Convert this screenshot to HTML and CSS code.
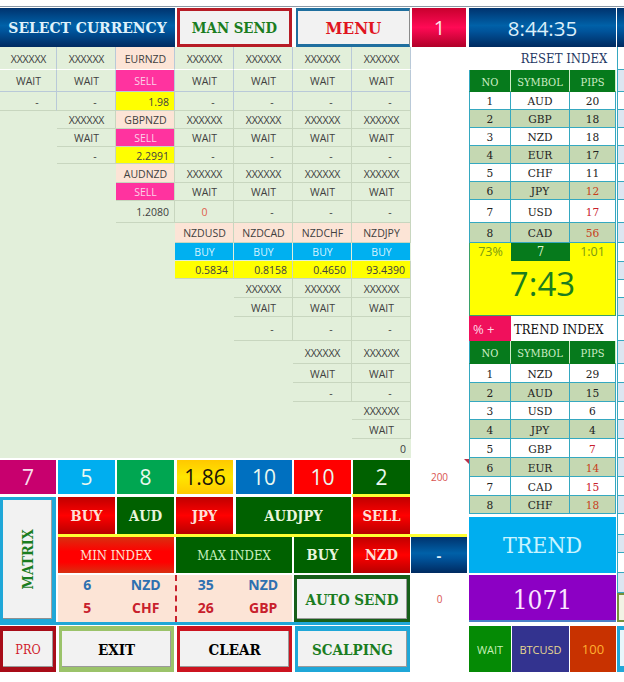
FILE: index.html
```html
<!DOCTYPE html>
<html lang="en">
<head>
<meta charset="utf-8">
<title>Currency Matrix</title>
<link rel="stylesheet" href="styles.css">
</head>
<body>
<div class="app">
  <div class="left">
    <div class="topbar">
      <div class="top-title">SELECT CURRENCY</div>
      <div class="top-man">MAN SEND</div>
      <div class="top-menu">MENU</div>
      <div class="top-one">1</div>
    </div>
    <div class="matrix">
      <div class="c x">XXXXXX</div><div class="c x">XXXXXX</div><div class="c p">EURNZD</div><div class="c x">XXXXXX</div><div class="c x">XXXXXX</div><div class="c x">XXXXXX</div><div class="c x">XXXXXX</div>
      <div class="c">WAIT</div><div class="c">WAIT</div><div class="c sell">SELL</div><div class="c">WAIT</div><div class="c">WAIT</div><div class="c">WAIT</div><div class="c">WAIT</div>
      <div class="c d">-</div><div class="c d">-</div><div class="c y">1.98</div><div class="c d">-</div><div class="c d">-</div><div class="c d">-</div><div class="c d">-</div>

      <div class="c x from2">XXXXXX</div><div class="c p">GBPNZD</div><div class="c x">XXXXXX</div><div class="c x">XXXXXX</div><div class="c x">XXXXXX</div><div class="c x">XXXXXX</div>
      <div class="c from2">WAIT</div><div class="c sell">SELL</div><div class="c">WAIT</div><div class="c">WAIT</div><div class="c">WAIT</div><div class="c">WAIT</div>
      <div class="c d from2">-</div><div class="c y">2.2991</div><div class="c d">-</div><div class="c d">-</div><div class="c d">-</div><div class="c d">-</div>

      <div class="c p from3">AUDNZD</div><div class="c x">XXXXXX</div><div class="c x">XXXXXX</div><div class="c x">XXXXXX</div><div class="c x">XXXXXX</div>
      <div class="c sell from3">SELL</div><div class="c">WAIT</div><div class="c">WAIT</div><div class="c">WAIT</div><div class="c">WAIT</div>
      <div class="c n from3">1.2080</div><div class="c zero">0</div><div class="c d">-</div><div class="c d">-</div><div class="c d">-</div>

      <div class="c p from4">NZDUSD</div><div class="c p">NZDCAD</div><div class="c p">NZDCHF</div><div class="c p">NZDJPY</div>
      <div class="c buy from4">BUY</div><div class="c buy">BUY</div><div class="c buy">BUY</div><div class="c buy">BUY</div>
      <div class="c y from4">0.5834</div><div class="c y">0.8158</div><div class="c y">0.4650</div><div class="c y">93.4390</div>

      <div class="c x from5">XXXXXX</div><div class="c x">XXXXXX</div><div class="c x">XXXXXX</div>
      <div class="c from5">WAIT</div><div class="c">WAIT</div><div class="c">WAIT</div>
      <div class="c d from5">-</div><div class="c d">-</div><div class="c d">-</div>

      <div class="c x from6">XXXXXX</div><div class="c x">XXXXXX</div>
      <div class="c from6">WAIT</div><div class="c">WAIT</div>
      <div class="c d from6">-</div><div class="c d">-</div>

      <div class="c x from7">XXXXXX</div>
      <div class="c from7">WAIT</div>
      <div class="c n plain from7">0</div>
    </div>

    <div class="panel">
      <div class="t s1">7</div><div class="t s2">5</div><div class="t s3">8</div><div class="t s4">1.86</div><div class="t s5">10</div><div class="t s6">10</div><div class="t s7">2</div><div class="side r-1">200</div>

      <div class="rule-short"></div>

      <div class="matrix-wrap"><div class="matrix-btn"><span>MATRIX</span></div></div>
      <div class="act red r-3 k2">BUY</div><div class="act green r-3 k3">AUD</div><div class="act red r-3 k4">JPY</div><div class="act green r-3 k5">AUDJPY</div><div class="act red r-3 k7">SELL</div>

      <div class="rule-yellow"></div>

      <div class="idx-min">MIN INDEX</div>
      <div class="idx-max">MAX INDEX</div>
      <div class="act green r-5 k6 mid">BUY</div>
      <div class="act red r-5 k7 mid">NZD</div>
      <div class="dash-btn">-</div>

      <div class="values">
        <div class="half">
          <span class="blue">6</span><span class="blue">NZD</span>
          <span class="crim">5</span><span class="crim">CHF</span>
        </div>
        <div class="half split">
          <span class="blue">35</span><span class="blue">NZD</span>
          <span class="crim">26</span><span class="crim">GBP</span>
        </div>
      </div>
      <div class="btn auto">AUTO SEND</div>
      <div class="side r-7">0</div>

      <div class="rule-blue"></div>

      <div class="btn pro">PRO</div>
      <div class="btn exit">EXIT</div>
      <div class="btn clear">CLEAR</div>
      <div class="btn scalp">SCALPING</div>
    </div>
  </div>

  <div class="right">
    <div class="rmain">
      <div class="clock">8:44:35</div>
      <div class="rtitle">RESET INDEX</div>
      <div class="tbl tbl-a">
        <div class="h">NO</div><div class="h">SYMBOL</div><div class="h">PIPS</div>
        <div>1</div><div>AUD</div><div>20</div>
        <div class="g">2</div><div class="g">GBP</div><div class="g">18</div>
        <div>3</div><div>NZD</div><div>18</div>
        <div class="g">4</div><div class="g">EUR</div><div class="g">17</div>
        <div>5</div><div>CHF</div><div>11</div>
        <div class="g">6</div><div class="g">JPY</div><div class="g or">12</div>
        <div>7</div><div>USD</div><div class="rd">17</div>
        <div class="g">8</div><div class="g">CAD</div><div class="g or">56</div>
      </div>
      <div class="timer">
        <div class="timer-top"><span>73%</span><span class="timer-box">7</span><span>1:01</span></div>
        <div class="timer-big">7:43</div>
      </div>
      <div class="trend-head"><div class="pct">% +</div><div class="ttitle">TREND INDEX</div></div>
      <div class="tbl tbl-b">
        <div class="h">NO</div><div class="h">SYMBOL</div><div class="h">PIPS</div>
        <div>1</div><div>NZD</div><div>29</div>
        <div class="g">2</div><div class="g">AUD</div><div class="g">15</div>
        <div>3</div><div>USD</div><div>6</div>
        <div class="g">4</div><div class="g">JPY</div><div class="g">4</div>
        <div>5</div><div>GBP</div><div class="rd">7</div>
        <div class="g">6</div><div class="g">EUR</div><div class="g or">14</div>
        <div>7</div><div>CAD</div><div class="rd">15</div>
        <div class="g">8</div><div class="g">CHF</div><div class="g or">18</div>
      </div>
      <div class="trend">TREND</div>
      <div class="count">1071</div>
      <div class="status">
        <div class="st-wait">WAIT</div>
        <div class="st-sym">BTCUSD</div>
        <div class="st-val">100</div>
      </div>
    </div>
    <div class="strip">
      <div class="st-blue"></div>
      <div class="st-w"></div><div class="st-l"></div><div class="st-w"></div><div class="st-l"></div><div class="st-w"></div><div class="st-l"></div><div class="st-w"></div><div class="st-l"></div><div class="st-w"></div><div class="st-l"></div><div class="st-w"></div><div class="st-l"></div><div class="st-w"></div><div class="st-l"></div><div class="st-w"></div><div class="st-l"></div><div class="st-w"></div><div class="st-l"></div><div class="st-w"></div><div class="st-l"></div><div class="st-w"></div><div class="st-l"></div><div class="st-w"></div><div class="st-l"></div><div class="st-w"></div><div class="st-l"></div><div class="st-w"></div><div class="st-l"></div>
      <div class="st-olive"></div>
      <div class="st-gap"></div>
      <div class="st-btn"></div>
    </div>
  </div>
</div>
</body>
</html>
```

FILE: styles.css
```css
* { box-sizing: border-box; }
html, body { margin: 0; padding: 0; background: #fff; }
body { width: 624px; height: 682px; overflow: hidden; font-family: "Open Sans", "Liberation Sans", sans-serif; }

.app {
  display: flex;
  margin-top: 6px;
  border-top: 1px solid #8c99a6;
  padding-top: 1px;
  --slab: "DejaVu Serif", serif;
  --navy: linear-gradient(#00336e 0%, #0061a8 45%, #00539a 60%, #002a60 100%);
}
.left { width: 469px; flex: none; }
.right { width: 155px; flex: none; display: flex; }
.rmain { width: 147px; flex: none; }

/* the slab lettering of the reference is narrow, so the condensed face is asked for wherever the slab font is used */
.top-title, .top-man, .top-menu, .matrix-btn, .act, .idx-min, .idx-max, .btn, .rtitle, .tbl, .timer-box, .ttitle, .trend, .count {
  font-stretch: condensed;
}

/* top bar */
.topbar { display: flex; height: 39px; width: 466px; font-family: var(--slab); font-weight: 700; }
.topbar > div { display: flex; align-items: center; justify-content: center; }
.top-title { width: 175px; background: var(--navy); color: #dff1fa; font-size: 15.5px; }
.top-man { width: 115px; margin-left: 2px; background: #f2f2f2; border: 3px solid #b71c26; color: #1b7d1f; font-size: 14.8px; }
.top-menu { width: 114px; margin-left: 4px; background: #f2f2f2; border-style: solid; border-color: #1f6f9f #8a8a8a #1f6f9f #1f6f9f; border-width: 3px 1px 3px 2px; color: #e0151f; font-size: 17px; }
.top-one { width: 54px; margin-left: 2px; padding-left: 1px; background: linear-gradient(#c8002e, #ff0a55 50%, #b00028); color: #fbe6ea; font-family: "Open Sans", sans-serif; font-weight: 400; font-size: 20px; }

/* matrix */
.matrix {
  width: 411px;
  height: 411px;
  background: #e2efda;
  display: grid;
  grid-template-columns: 57px repeat(6, 59px);
  grid-template-rows: 23px 22px 19px 18px 18px 17px 19px 18px 22px 20px 18px 18px 19px 19px 24px 23px 19px 19px 18px 19px 19px;
  font-size: 10.5px;
  color: #404040;
}
.c { display: flex; align-items: center; justify-content: center; padding-top: 1px; padding-left: 1px; border-bottom: 1px solid #c8d6bf; border-right: 1px solid #c8d6bf; }
.c:nth-child(-n+21) { border-right-color: #b9c9d8; }
.c:nth-child(-n+7) { border-bottom-color: #fff; }
.c:nth-child(n+8):nth-child(-n+14) { border-bottom-color: #b9c9d8; }
.x { letter-spacing: -0.15px; }
.p { background: #fce4d6; }
.sell { background: #ff339f; color: #fbd2e8; }
.buy { background: #00b0f0; color: #d6f3ff; border-color: #e2efda; }
.y { background: #ffff00; justify-content: flex-end; padding-right: 5px; }
.n { justify-content: flex-end; padding-right: 5px; }
.plain { border: 0; }
.d { padding-left: 18px; }
.zero { color: #e0604c; }
.from2 { grid-column-start: 2; }
.from3 { grid-column-start: 3; }
.from4 { grid-column-start: 4; }
.from5 { grid-column-start: 5; }
.from6 { grid-column-start: 6; }
.from7 { grid-column-start: 7; }

/* bottom panel */
.panel {
  margin-top: 2px;
  display: grid;
  column-gap: 2px;
  grid-template-columns: 56px 57px 57px 57px 57px 57px 57px 55px;
  grid-template-rows: 34px 3px 37px 3px 36px 2px 47px 4px 46px;
  width: 469px;
}
.t { grid-row: 1; display: flex; align-items: center; justify-content: center; font-size: 21px; color: #e9f8ef; }
.s1 { background: #c8006e; color: #f9dcec; }
.s2 { background: #00aeef; }
.s3 { background: #00a651; }
.s4 { background: linear-gradient(#ffc800, #ffe600 50%, #ffc800); color: #1a1408; margin-left: 1px; }
.s5 { background: #0070c0; margin-left: 1px; }
.s6 { background: #ff0000; }
.s7 { background: #006100; }
.side { display: flex; align-items: center; justify-content: center; grid-column: 8; color: #d9534f; font-size: 10px; }
.r-1 { grid-row: 1; position: relative; }
.r-1::after { content: ""; position: absolute; top: -1px; right: -2px; border-style: solid; border-width: 0 5px 5px 0; border-color: transparent #b8324a transparent transparent; }
.r-7 { grid-row: 7; }
.rule-short { grid-row: 2; grid-column: 7; background: #ffff33; margin-left: -1px; }
.rule-yellow { grid-row: 4; grid-column: 2 / -1; background: #ffff33; }
.rule-blue { grid-row: 8; grid-column: 2 / 8; background: #1fa7d8; margin-bottom: 1px; margin-left: -2px; }

.matrix-wrap { grid-row: 3 / 8; grid-column: 1; background: #1fa7d8; padding: 3px 4px 6px 3px; margin-bottom: -3px; }
.matrix-btn { height: 100%; padding-left: 1px; background: #f2f2f2; border-right: 1px solid #a0a0a0; border-bottom: 1px solid #909090; display: flex; align-items: center; justify-content: center; }
.matrix-btn span { writing-mode: vertical-rl; transform: rotate(180deg); font-family: var(--slab); font-weight: 700; font-size: 14.5px; color: #1b7d1f; }

.act { display: flex; align-items: center; justify-content: center; padding-bottom: 1px; font-family: var(--slab); font-weight: 700; font-size: 14.6px; color: #f3f3e8; }
.red { background: linear-gradient(#c00000, #ff0000 50%, #b80000); color: #fde0d8; }
.green { background: #006100; color: #e8f5dc; }
.r-3 { grid-row: 3; }
.r-5 { grid-row: 5; }
.k2 { grid-column: 2; }
.k3 { grid-column: 3; }
.k4 { grid-column: 4; }
.k5 { grid-column: 5 / 7; margin-left: 1px; }
.k6 { grid-column: 6; }
.k7 { grid-column: 7; }

.idx-min, .idx-max { grid-row: 5; display: flex; align-items: center; justify-content: center; font-family: var(--slab); font-size: 13px; }
.idx-min { grid-column: 2 / 4; background: linear-gradient(#d83010, #ff0000 40%, #ff0000 70%, #d83010); color: #fce4d6; }
.idx-max { grid-column: 4 / 6; background: #006100; color: #c9f0c0; }
.dash-btn { grid-row: 5; grid-column: 8; background: var(--navy); color: #dff1fa; display: flex; align-items: center; justify-content: center; font-weight: 700; font-size: 15px; margin-left: -1px; }

.values { grid-row: 7; grid-column: 2 / 6; background: #fce4d6; display: grid; grid-template-columns: 1fr 1fr; }
.half { display: grid; grid-template-columns: 1fr 1fr; grid-template-rows: 18px 29px; align-items: center; justify-items: center; font-weight: 700; font-size: 14px; }
.split { border-left: 2px dashed #c8202c; }
.blue { color: #2e70b0; }
.crim { color: #c8202c; }

.btn { display: flex; align-items: center; justify-content: center; background: #f2f2f2; font-family: var(--slab); font-weight: 700; border-style: solid; box-shadow: inset -1px -1px 0 #9a9a9a; }
.auto { grid-row: 7; grid-column: 6 / 8; padding-top: 2px; border-color: #175f1a; border-width: 4px 3px 3px 3px; color: #1b7d1f; font-size: 15px; }
.pro, .exit, .clear, .scalp { grid-row: 9; padding-top: 1px; border-width: 5px 3px 5px 3px; }
.pro { grid-column: 1; border-color: #a80c18; color: #d01a2a; font-weight: 400; font-size: 12.5px; }
.exit { grid-column: 2 / 4; border-color: #9bc36a; color: #000; font-size: 15px; margin-left: 1px; }
.clear { grid-column: 4 / 6; border-color: #cc1420; color: #000; font-size: 15px; margin-left: 1px; }
.scalp { grid-column: 6 / 8; border-color: #1fa7d8; color: #1b7d1f; font-size: 15px; margin-left: 1px; }

/* right column */
.clock { height: 39px; background: var(--navy); color: #dbeffa; font-size: 20.5px; display: flex; align-items: center; justify-content: center; }
.rtitle { height: 23px; display: flex; align-items: center; justify-content: center; padding-left: 43px; font-family: var(--slab); font-size: 13px; color: #1f3864; }
.tbl { display: grid; grid-template-columns: 42px 59px 46px; font-family: var(--slab); font-size: 11.8px; color: #222; }
.tbl > div { display: flex; align-items: center; justify-content: center; padding-top: 1px; border-right: 1px solid #35a8c0; border-bottom: 1px solid #35a8c0; }
.tbl > div:nth-child(3n+1) { border-left: 1px solid #35a8c0; }
.tbl-a { grid-template-rows: 22px 18px 18px 18px 18px 18px 18px 23px 20px; }
.tbl-b { grid-template-rows: 23px 19px 19px 18px 19px 19px 19px 19px 18px; }
.tbl > .h { background: #067a1c; color: #cdeec6; padding-top: 3px; border-color: #067a1c #cdeec6 #067a1c #067a1c; font-size: 11px; }
.tbl > .g { background: #c5d8b2; }
.tbl > .or { color: #c8401c; }
.tbl > .rd { color: #c8202c; }

.timer { height: 73px; background: #ffff00; border: 1px solid #3aa06a; border-top: 0; }
.timer-top { display: grid; grid-template-columns: 41px 59px 1fr; height: 18px; color: #7c9a10; font-size: 12.5px; text-align: center; line-height: 18px; }
.timer-box { background: #067a1c; color: #dff5d0; font-family: var(--slab); }
.timer-big { text-align: center; font-size: 33px; line-height: 46px; color: #1b7d1f; }

.trend-head { height: 25px; display: flex; }
.pct { width: 42px; background: #f0105c; color: #ffd8e4; font-size: 13px; display: flex; align-items: center; padding-left: 4px; }
.ttitle { flex: 1; display: flex; align-items: center; padding: 1px 0 0 3px; font-family: var(--slab); font-size: 13px; color: #111; }

.trend { height: 56px; margin-top: 3px; background: #00aeef; color: #c8f4ff; font-family: var(--slab); font-size: 23px; display: flex; align-items: center; justify-content: center; }
.count { height: 47px; margin-top: 2px; padding-top: 4px; background: #8c00c4; color: #fbe6ff; font-family: var(--slab); font-size: 26px; display: flex; align-items: center; justify-content: center; border-bottom: 2px solid #4a80c8; }
.status { margin-top: 4px; height: 46px; display: grid; grid-template-columns: 42px 59px 46px; font-size: 11px; }
.status > div { display: flex; align-items: center; justify-content: center; }
.st-wait { background: #058a05; color: #c8f0b8; }
.st-sym { background: #33338f; color: #e8d890; margin: 0 1px; }
.st-val { background: #c83200; color: #ffb030; font-size: 13px; }

.strip {
  margin-left: 1px;
  width: 7px;
  display: grid;
  grid-template-rows: 39px 23px 22px 18px 18px 18px 18px 18px 18px 23px 20px 19px 18px 18px 18px 25px 23px 19px 19px 18px 19px 19px 19px 19px 18px 21px 18px 20px 20px 29px 4px 46px;
  height: 664px;
}
.st-blue { background: var(--navy); }
.st-w, .st-l { border-bottom: 1px solid #35a8c0; border-left: 1px solid #35a8c0; }
.st-w { background: #fff; }
.st-l { background: #dce6f1; }
.st-olive { background: #f2f2e4; border-style: solid; border-color: #76923c; border-width: 2px 0 2px 2px; }
.st-btn { background: #e8f6fb; border-style: solid; border-color: #1fa7d8; border-width: 4px 0 6px 3px; }
```
